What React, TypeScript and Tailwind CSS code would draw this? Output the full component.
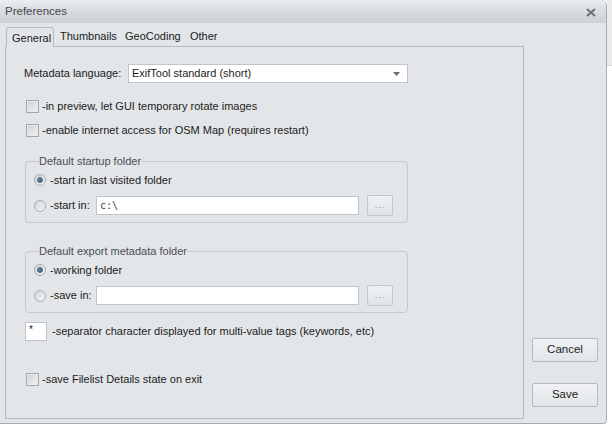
import React from "react";

function CheckBox() {
  return (
    <span className="w-[13px] h-[13px] shrink-0 border border-[#a3a7ad] bg-linear-to-br from-[#cdd1d6] to-[#f1f2f4] shadow-[inset_0_0_0_1px_#e9ebee]" />
  );
}

function Radio({ checked }: { checked?: boolean }) {
  return (
    <span className="w-[12px] h-[12px] shrink-0 rounded-full border border-[#a6aab0] bg-linear-to-br from-[#d3d6da] to-[#f5f6f7] flex items-center justify-center">
      {checked && <span className="w-[6px] h-[6px] rounded-full bg-linear-to-br from-[#7d93b3] to-[#3d5677] border border-[#44597a]" />}
    </span>
  );
}

function DotsButton() {
  return (
    <button className="w-[26px] h-[21px] ml-[8px] rounded-[2px] border border-[#c3c6cb] bg-linear-to-b from-[#eff1f3] to-[#e1e4e7] text-[#8a8d92] text-[9px] leading-none tracking-[1px] flex items-center justify-center">
      ...
    </button>
  );
}

function Group({ title, first, second, value }: { title: string; first: string; second: string; value: string }) {
  return (
    <fieldset className="w-[383px] h-[69px] border border-[#c5c8cc] rounded-[4px] pl-[8px] pr-[14px]">
      <legend className="ml-[5px] px-0 leading-[14px] text-[#4a4d52]">{title}</legend>
      <div className="flex items-center h-[16px] mt-[4px]">
        <Radio checked />
        <span className="ml-[4px]">{first}</span>
      </div>
      <div className="flex items-center h-[21px] mt-[7px]">
        <Radio />
        <span className="ml-[4px] w-[46px] whitespace-nowrap">{second}</span>
        <div className="flex-1 h-[19px] bg-white border border-[#c1c4c8] pl-[3px] flex items-center font-['DejaVu_Sans_Mono',monospace] text-[10px] text-[#444]">
          {value}
        </div>
        <DotsButton />
      </div>
    </fieldset>
  );
}

export default function App() {
  return (
    <div className="w-[612px] h-[425px] flex bg-white overflow-hidden font-['Liberation_Sans',Arial,sans-serif] text-[11px] text-[#1b1b1b]">
      <div className="w-[607px] h-[424px] flex flex-col bg-[#e3e6e9] border-r border-b border-[#a9adb3] rounded-tr-[6px] rounded-br-[4px]">
        {/* title bar */}
        <div className="h-[23px] shrink-0 flex items-center justify-between pl-[5px] pr-[10px] bg-linear-to-b from-[#eceef0] via-[#d8dbdf] to-[#cdd1d6] rounded-tr-[6px]">
          <span className="text-[11.5px] text-[#45484d] pt-[1px]">Preferences</span>
          <svg width="10" height="9" viewBox="0 0 10 9" className="mt-[1px]">
            <path d="M1 1 L9 8 M9 1 L1 8" stroke="#6f737a" strokeWidth="2.2" />
          </svg>
        </div>

        <div className="flex flex-1">
          {/* tabs + panel */}
          <div className="w-[519px] ml-[5px] pt-[4px] flex flex-col">
            <div className="flex h-[19px] items-end">
              <div className="h-[20px] w-[48px] ml-[1px] -mb-[1px] z-10 bg-[#e3e6e9] border border-b-0 border-[#b8bbc0] rounded-t-[3px] flex items-center pl-[5px] pt-[1px]">
                General
              </div>
              <span className="ml-[6px] mb-[2px] w-[65px] whitespace-nowrap">Thumbnails</span>
              <span className="mb-[2px] w-[65px] whitespace-nowrap">GeoCoding</span>
              <span className="mb-[2px]">Other</span>
            </div>
            <div className="h-[373px] border border-[#b8bbc0] pl-[18px] flex flex-col">
              <div className="flex items-center mt-[17px] h-[19px]">
                <span className="w-[104px] shrink-0 whitespace-nowrap">Metadata language:</span>
                <div className="w-[280px] h-[19px] bg-white border border-[#c1c4c8] flex items-center pl-[3px] pr-[7px] justify-between">
                  <span>ExifTool standard (short)</span>
                  <svg width="7" height="4" viewBox="0 0 7 4">
                    <path d="M0 0 H7 L3.5 4 Z" fill="#6c7076" />
                  </svg>
                </div>
              </div>

              <div className="flex items-center h-[16px] mt-[15px] ml-[2px]">
                <CheckBox />
                <span className="ml-[3px]">-in preview, let GUI temporary rotate images</span>
              </div>
              <div className="flex items-center h-[16px] mt-[8px] ml-[2px]">
                <CheckBox />
                <span className="ml-[3px]">-enable internet access for OSM Map (requires restart)</span>
              </div>

              <div className="mt-[16px] ml-[1px]">
                <Group title="Default startup folder" first="-start in last visited folder" second="-start in:" value="c:\" />
              </div>
              <div className="mt-[21px] ml-[1px]">
                <Group title="Default export metadata folder" first="-working folder" second="-save in:" value="" />
              </div>

              <div className="flex items-center h-[19px] mt-[9px] ml-[1px]">
                <div className="w-[22px] h-[19px] bg-white border border-[#c1c4c8] pl-[3px] leading-[14px] text-[10px]">*</div>
                <span className="ml-[5px]">-separator character displayed for multi-value tags (keywords, etc)</span>
              </div>

              <div className="flex items-center h-[16px] mt-[30px] ml-[2px]">
                <CheckBox />
                <span className="ml-[3px]">-save Filelist Details state on exit</span>
              </div>
            </div>
          </div>

          {/* buttons */}
          <div className="flex flex-col ml-[8px] pt-[315px]">
            <button className="w-[66px] h-[24px] rounded-[2px] border border-[#b6b9be] bg-linear-to-b from-[#f0f2f4] to-[#e2e5e8] text-[11.5px]">
              Cancel
            </button>
            <button className="w-[66px] h-[24px] mt-[21px] rounded-[2px] border border-[#b6b9be] bg-linear-to-b from-[#f0f2f4] to-[#e2e5e8] text-[11.5px]">
              Save
            </button>
          </div>
        </div>
      </div>
      <div className="flex-1 flex flex-col">
        <div className="h-[66px] bg-[#ebebeb] border-b border-[#d6d6d6]" />
      </div>
    </div>
  );
}
